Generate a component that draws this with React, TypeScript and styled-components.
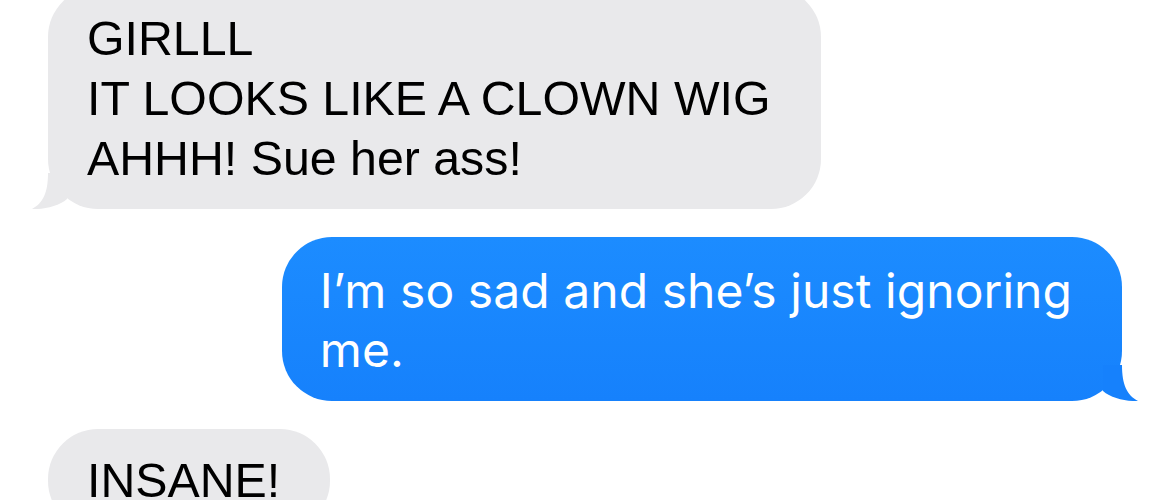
import React from "react";
import styled, { createGlobalStyle } from "styled-components";

const Global = createGlobalStyle`
  html, body { margin: 0; padding: 0; background: #ffffff; }
  body { width: 1170px; height: 500px; overflow: hidden; }
`;

const Thread = styled.div`
  display: flex;
  flex-direction: column;
  gap: 28px;
  padding: 0 48px;
  margin-top: -13px;
`;

const Bubble = styled.div<{ $mine?: boolean }>`
  position: relative;
  align-self: ${(p) => (p.$mine ? "flex-end" : "flex-start")};
  border-radius: 50px;
  background: ${(p) =>
    p.$mine ? "linear-gradient(180deg, #1c8cff 0%, #1681fc 100%)" : "#e9e9eb"};
  color: ${(p) => (p.$mine ? "#ffffff" : "#000000")};
  font-family: ${(p) =>
    p.$mine ? "Inter, 'Open Sans', sans-serif" : "'Liberation Sans', Arial, sans-serif"};
  font-size: ${(p) => (p.$mine ? "48px" : "48.3px")};
  letter-spacing: ${(p) => (p.$mine ? "0.06px" : "0")};
  line-height: ${(p) => (p.$mine ? "59px" : "60px")};
  padding: ${(p) => (p.$mine ? "24px 50px 22px 38px" : "21px 50px 21px 39px")};
`;

const Tail = styled.svg<{ $mine?: boolean }>`
  position: absolute;
  bottom: 0;
  width: 40px;
  height: 40px;
  ${(p) => (p.$mine ? "right: -16px;" : "left: -16px; transform: scaleX(-1);")}
`;

function BubbleTail({ mine, color }: { mine?: boolean; color: string }) {
  return (
    <Tail $mine={mine} viewBox="0 0 40 40" aria-hidden>
      <path
        d="M24 4 C24 24 29 34 40 40 C28 40.6 13 37 5 30 L5 4 Z"
        fill={color}
      />
    </Tail>
  );
}

export default function App() {
  return (
    <>
      <Global />
      <Thread>
        <Bubble>
          GIRLLL
          <br />
          IT LOOKS LIKE A CLOWN WIG
          <br />
          AHHH! Sue her ass!
          <BubbleTail color="#e9e9eb" />
        </Bubble>
        <Bubble $mine>
          I’m so sad and she’s just ignoring
          <br />
          me.
          <BubbleTail mine color="#1681fc" />
        </Bubble>
        <Bubble>INSANE!</Bubble>
      </Thread>
    </>
  );
}
